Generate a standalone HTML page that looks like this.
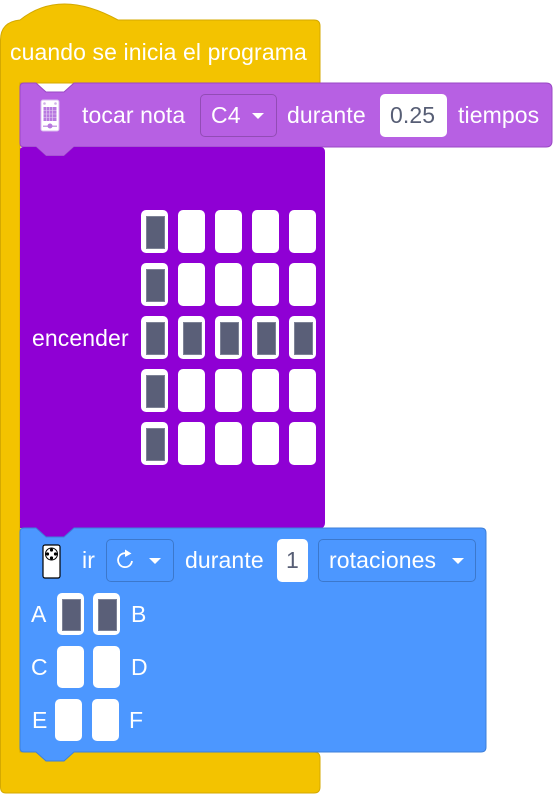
<!DOCTYPE html>
<html><head><meta charset="utf-8"><style>
*{margin:0;padding:0;box-sizing:border-box}
body{width:553px;height:794px;background:#fff;position:relative;overflow:hidden;font-family:"Liberation Sans",sans-serif;color:#fff}
.a{position:absolute}
.t{position:absolute;font-size:23px;line-height:26px;white-space:nowrap;letter-spacing:0.1px}
.led{position:absolute;width:27px;height:43px;background:#fff;border-radius:5px}
.led.on::after{content:"";position:absolute;left:5px;top:6px;width:17px;height:31px;background:#5a5f78;border:1px solid #7d8296}
.bl{position:absolute;width:27px;height:42px;background:#fff;border-radius:5px}
.bl.on::after{content:"";position:absolute;left:5px;top:6px;width:17px;height:30px;background:#5a5f78;border:1px solid #7d8296}
.dd{position:absolute;border:1px solid rgba(0,0,0,0.2);border-radius:5px}
.tri{position:absolute;width:0;height:0;border-left:6px solid transparent;border-right:6px solid transparent;border-top:6px solid #fff}
</style></head><body>
<svg class="a" style="left:0;top:0" width="553" height="794">
<path d="M0.5 60 L0.5 40 Q0.5 22 20 20 Q60 -12 118 20 L314 20 Q320 20 320 26 L320 83 L20 83 L20 752 L314 752 Q320 752 320 758 L320 787 Q320 793 314 793 L6 793 Q0.5 793 0.5 787 Z" fill="#f3c300" stroke="#d4a900" stroke-width="1"/>
<path d="M24 83 L36 83 L46 92 L64 92 L74 83 L546 83 Q552 83 552 89 L552 141 Q552 147 546 147 L74 147 L64 156 L46 156 L36 147 L24 147 Q20 147 20 143 L20 87 Q20 83 24 83 Z" fill="#b760e3" stroke="#9a47c4" stroke-width="1"/>
<path d="M20 150 Q20 147 24 147 L36 147 L46 156 L64 156 L74 147 L320 147 Q325 147 325 152 L325 523 Q325 528 320 528 L74 528 L64 537 L46 537 L36 528 L20 528 Z" fill="#8f00d4"/>
<path d="M24 528 L36 528 L46 537 L64 537 L74 528 L481 528 Q486 528 486 533 L486 747 Q486 752 481 752 L74 752 L64 761 L46 761 L36 752 L24 752 Q20 752 20 748 L20 532 Q20 528 24 528 Z" fill="#4c97ff" stroke="#3d7fd9" stroke-width="1"/>
<rect x="41" y="100" width="18" height="31" rx="2" fill="#fff" stroke="#d9b8ef"/>
<circle cx="44.5" cy="103.5" r="1.3" fill="#d0b0e8"/><circle cx="55.5" cy="103.5" r="1.3" fill="#d0b0e8"/>
<rect x="43.5" y="107" width="13" height="14" fill="#b879e0"/>
<path d="M43.5 110.5H56.5M43.5 114H56.5M43.5 117.5H56.5M46.5 107V121M49.5 107V121M52.5 107V121" stroke="#e6d0f3" stroke-width="0.6"/>
<rect x="43" y="125.5" width="14" height="1.5" fill="#c9a0e6"/>
<circle cx="50" cy="126" r="2.5" fill="#b879e0"/>
<rect x="43" y="545" width="17" height="33" rx="2" fill="#fff" stroke="#000" stroke-width="1.2"/>
<circle cx="51.5" cy="554" r="6" fill="#fff" stroke="#000"/>
<circle cx="51.5" cy="550" r="1.6"/><circle cx="51.5" cy="558" r="1.6"/><circle cx="47.5" cy="554" r="1.6"/><circle cx="55.5" cy="554" r="1.6"/>
<path d="M132 561 A7 7 0 1 1 126 553.2" fill="none" stroke="#fff" stroke-width="1.8"/>
<path d="M125 549.5 L131.5 553.5 L125 557 Z" fill="#fff"/>
</svg>
<div class="t" style="left:10px;top:39px">cuando se inicia el programa</div>
<div class="t" style="left:82px;top:102px">tocar nota</div>
<div class="dd" style="left:200px;top:94px;width:77px;height:43px"></div>
<div class="t" style="left:211px;top:102px">C4</div>
<div class="tri" style="left:252px;top:113px"></div>
<div class="t" style="left:287px;top:102px">durante</div>
<div class="a" style="left:380px;top:94px;width:67px;height:43px;background:#fff;border-radius:5px"></div>
<div class="t" style="left:390px;top:102px;color:#575e75">0.25</div>
<div class="t" style="left:458px;top:102px">tiempos</div>
<div class="t" style="left:32px;top:325px">encender</div>
<div class="led on" style="left:141px;top:210px"></div><div class="led" style="left:178px;top:210px"></div><div class="led" style="left:215px;top:210px"></div><div class="led" style="left:252px;top:210px"></div><div class="led" style="left:289px;top:210px"></div>
<div class="led on" style="left:141px;top:263px"></div><div class="led" style="left:178px;top:263px"></div><div class="led" style="left:215px;top:263px"></div><div class="led" style="left:252px;top:263px"></div><div class="led" style="left:289px;top:263px"></div>
<div class="led on" style="left:141px;top:316px"></div><div class="led on" style="left:178px;top:316px"></div><div class="led on" style="left:215px;top:316px"></div><div class="led on" style="left:252px;top:316px"></div><div class="led on" style="left:289px;top:316px"></div>
<div class="led on" style="left:141px;top:369px"></div><div class="led" style="left:178px;top:369px"></div><div class="led" style="left:215px;top:369px"></div><div class="led" style="left:252px;top:369px"></div><div class="led" style="left:289px;top:369px"></div>
<div class="led on" style="left:141px;top:422px"></div><div class="led" style="left:178px;top:422px"></div><div class="led" style="left:215px;top:422px"></div><div class="led" style="left:252px;top:422px"></div><div class="led" style="left:289px;top:422px"></div>
<div class="t" style="left:82px;top:547px">ir</div>
<div class="dd" style="left:106px;top:539px;width:68px;height:43px"></div>
<div class="tri" style="left:149px;top:558px"></div>
<div class="t" style="left:185px;top:547px">durante</div>
<div class="a" style="left:277px;top:539px;width:31px;height:43px;background:#fff;border-radius:5px"></div>
<div class="t" style="left:286px;top:547px;color:#575e75">1</div>
<div class="dd" style="left:318px;top:539px;width:158px;height:43px"></div>
<div class="t" style="left:329px;top:547px">rotaciones</div>
<div class="tri" style="left:452px;top:558px"></div>
<div class="t" style="left:31px;top:601px">A</div><div class="bl on" style="left:57px;top:593px"></div><div class="bl on" style="left:93px;top:593px"></div><div class="t" style="left:131px;top:601px">B</div>
<div class="t" style="left:31px;top:654px">C</div><div class="bl" style="left:57px;top:646px"></div><div class="bl" style="left:93px;top:646px"></div><div class="t" style="left:131px;top:654px">D</div>
<div class="t" style="left:32px;top:707px">E</div><div class="bl" style="left:55px;top:699px"></div><div class="bl" style="left:92px;top:699px"></div><div class="t" style="left:129px;top:707px">F</div>
</body></html>
